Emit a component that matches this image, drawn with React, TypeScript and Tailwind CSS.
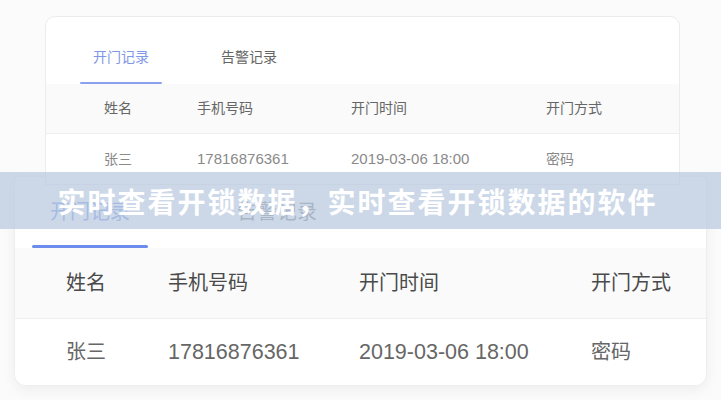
import React from 'react';

const font = { fontFamily: '"Liberation Sans", "Noto Sans CJK SC", sans-serif' };

const Tabs: React.FC<{ big?: boolean }> = ({ big }) => (
  <div className={big ? 'flex h-[71px] items-end pl-[17px]' : 'flex h-[67px] items-end pl-[34px]'}>
    <div className={big ? 'flex flex-col items-center w-[116px]' : 'flex flex-col items-center w-[82px]'}>
      <span className={big ? 'text-[20px] leading-none text-[#6f8ce6] mb-[23px]' : 'text-[14px] leading-none text-[#7f97e8] mb-[18px]'}>
        开门记录
      </span>
      <div className={big ? 'h-[3px] w-full bg-[#6b8ceb] rounded-full' : 'h-[2px] w-full bg-[#8aa2ee] rounded-full'}></div>
    </div>
    <div className={big ? 'flex flex-col items-center w-[116px] ml-[71px]' : 'flex flex-col items-center w-[82px] ml-[46px]'}>
      <span className={big ? 'text-[20px] leading-none text-[#777] mb-[26px]' : 'text-[14px] leading-none text-[#666] mb-[20px]'}>
        告警记录
      </span>
    </div>
  </div>
);

const Table: React.FC<{ big?: boolean }> = ({ big }) => {
  const cols = big
    ? 'grid grid-cols-[102px_191px_232px_1fr] pl-[51px]'
    : 'grid grid-cols-[93px_154px_195px_1fr] pl-[58px]';
  return (
    <div>
      <div
        className={`${cols} items-center bg-[#fafafa] border-b border-[#efefef] ${
          big ? 'h-[71px] text-[20px] text-[#4a4a4a]' : 'h-[50px] text-[14px] text-[#666]'
        }`}
      >
        <span>姓名</span>
        <span>手机号码</span>
        <span>开门时间</span>
        <span>开门方式</span>
      </div>
      <div
        className={`${cols} items-center bg-white ${
          big ? 'h-[66px] text-[20px] text-[#666]' : 'h-[50px] text-[14px] text-[#8a8a8a]'
        }`}
      >
        <span>张三</span>
        <span className={big ? 'text-[21.5px]' : 'text-[15px]'}>17816876361</span>
        <span className={big ? 'text-[21.5px]' : 'text-[15px]'}>2019-03-06 18:00</span>
        <span>密码</span>
      </div>
    </div>
  );
};

export default function App() {
  return (
    <div className="relative h-[400px] w-[721px] overflow-hidden bg-[#fbfbfb]" style={font}>
      <div className="pt-[16px]">
        {/* small card */}
        <div className="relative z-10 ml-[45px] mr-[41px] bg-white rounded-t-[10px] border border-[#ececec] overflow-hidden">
          <Tabs />
          <Table />
        </div>
        {/* enlarged card */}
        <div className="-mt-[9px] mx-[14px] bg-white rounded-b-[12px] border border-[#eeeeee] shadow-[0_4px_14px_rgba(0,0,0,0.06)] overflow-hidden">
          <Tabs big />
          <Table big />
        </div>
      </div>

      {/* caption banner */}
      <div className="absolute z-20 inset-x-0 top-[172px] h-[57px] bg-[rgba(186,202,224,0.74)] flex items-center justify-center">
        <span
          className="text-white font-bold text-[28px] tracking-[2px] leading-none pr-[6px]"
          style={{ fontFamily: '"Noto Sans CJK SC", sans-serif' }}
        >
          实时查看开锁数据，实时查看开锁数据的软件
        </span>
      </div>
    </div>
  );
}
